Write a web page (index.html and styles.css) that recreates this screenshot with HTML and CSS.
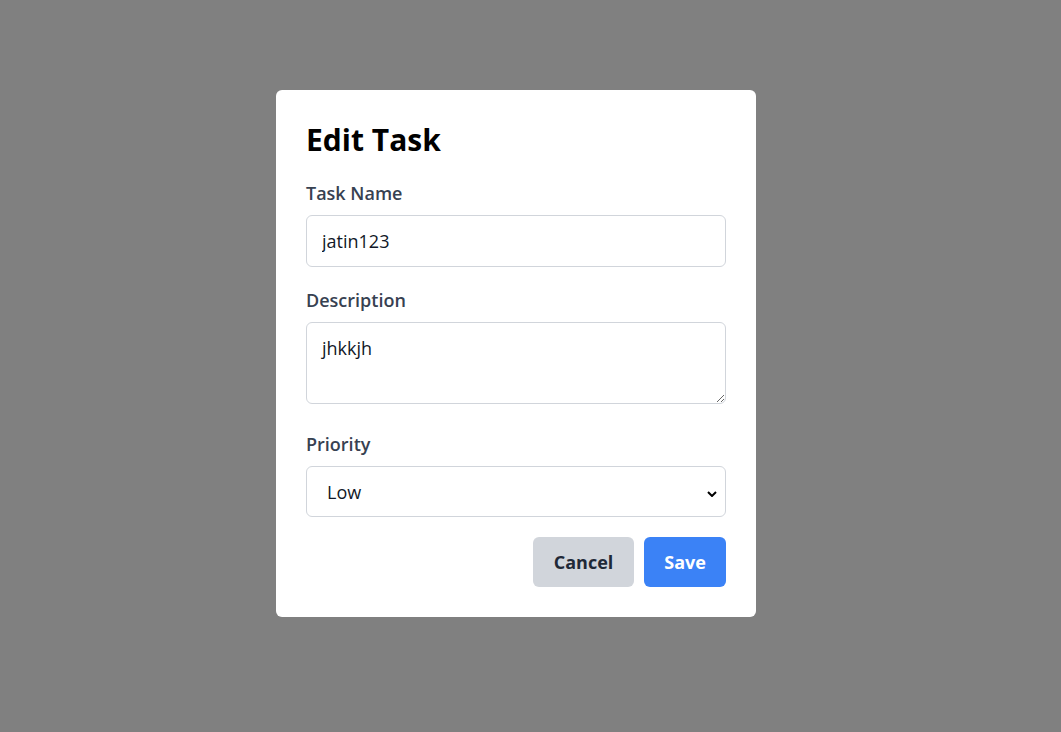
FILE: index.html
```html
<!DOCTYPE html>
<html lang="en">
<head>
<meta charset="utf-8">
<title>Edit Task</title>
<link rel="stylesheet" href="styles.css">
</head>
<body>
<div class="overlay">
  <div class="modal">
    <h2 class="modal-title">Edit Task</h2>
    <div class="form-group">
      <label class="form-label" for="name">Task Name</label>
      <input class="form-input" id="name" type="text" value="jatin123">
    </div>
    <div class="form-group">
      <label class="form-label" for="desc">Description</label>
      <textarea class="form-input form-textarea" id="desc">jhkkjh</textarea>
    </div>
    <div class="form-group">
      <label class="form-label" for="prio">Priority</label>
      <select class="form-input form-select" id="prio">
        <option selected>Low</option>
        <option>Medium</option>
        <option>High</option>
      </select>
    </div>
    <div class="actions">
      <button class="btn btn-cancel" type="button">Cancel</button>
      <button class="btn btn-save" type="button">Save</button>
    </div>
  </div>
</div>
</body>
</html>
```

FILE: styles.css
```css
* { box-sizing: border-box; }
html, body { margin: 0; padding: 0; }
body {
  background: #808080;
  font-family: "Open Sans", "Noto Sans", sans-serif;
  min-height: 100vh;
}
.overlay {
  padding: 90px 0 0 276px;
}
.modal {
  width: 480px;
  background: #fff;
  border-radius: 6px;
  padding: 30px;
}
.modal-title {
  margin: 0 0 20px;
  font-size: 30px;
  line-height: 40px;
  font-weight: 700;
  color: #000;
}
.form-group {
  display: flex;
  flex-direction: column;
  margin-bottom: 20px;
}
.form-label {
  display: block;
  font-size: 18px;
  line-height: 27px;
  font-weight: 600;
  color: #374151;
  margin-bottom: 8px;
}
.form-input {
  display: block;
  width: 100%;
  font-family: inherit;
  font-size: 18px;
  line-height: 26px;
  color: #111827;
  padding: 12px 15px;
  border: 1px solid #d1d5db;
  border-radius: 6px;
  background: #fff;
  margin: 0;
}
.form-textarea {
  height: 82px;
  resize: vertical;
  margin-bottom: 7px;
}
.form-select {
  height: 51px;
  padding: 10px 30px 10px 20px;
  -webkit-appearance: none;
  appearance: none;
  background-image: url("data:image/svg+xml;utf8,<svg xmlns='http://www.w3.org/2000/svg' width='10' height='6' viewBox='0 0 10 6'><path d='M1 1L5 5L9 1' fill='none' stroke='%23000' stroke-width='2'/></svg>");
  background-repeat: no-repeat;
  background-size: 10px 6px;
  background-position: right 8px top 24px;
}
.actions {
  display: flex;
  justify-content: flex-end;
  gap: 10px;
}
.btn {
  font-family: inherit;
  font-size: 18px;
  line-height: 26px;
  font-weight: 700;
  padding: 12px 21px;
  border: none;
  border-radius: 6px;
}
.btn-cancel { background: #d1d5db; color: #1f2937; }
.btn-save { background: #3b82f6; color: #fff; padding: 12px 20px; }
```
